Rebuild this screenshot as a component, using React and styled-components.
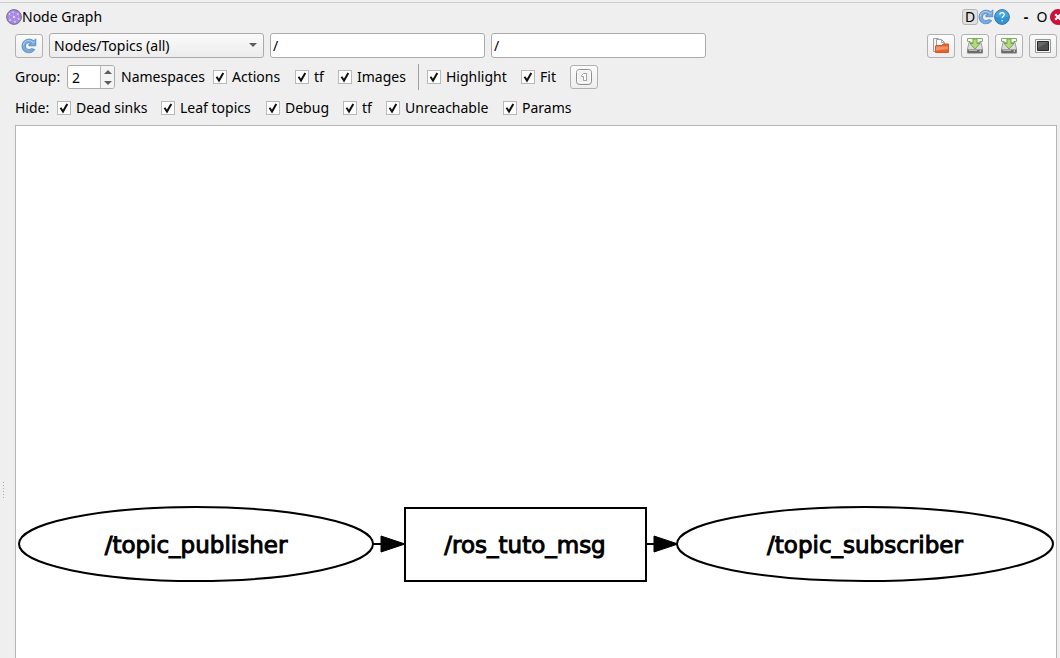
import React, { useState } from "react";
import styled, { createGlobalStyle } from "styled-components";

const Global = createGlobalStyle`
  * { box-sizing: border-box; }
  html, body { margin: 0; background: #efefef; }
  body, input, select, button {
    font-family: "Noto Sans", "Open Sans", sans-serif;
    font-size: 14px;
    color: #000;
  }
`;

const Window = styled.main`
  height: 100vh;
  overflow: hidden;
  display: flex;
  flex-direction: column;
  padding-top: 2px;
  background: #efefef;
`;

const TitleBar = styled.header`
  flex: none;
  display: flex;
  align-items: center;
  height: 28px;
  margin-right: -6px;
  padding-left: 6px;
  border-top: 1px solid #cdcdcd;
`;

const Title = styled.h1`
  flex: 1;
  margin: 0;
  font-size: 14px;
  font-weight: 400;
  line-height: 20px;
`;

const TitleButton = styled.button`
  flex: none;
  display: flex;
  align-items: center;
  justify-content: center;
  width: 16px;
  height: 16px;
  padding: 0;
  border: ${(p) => (p.$boxed ? "1px solid #b4b4b4" : "0")};
  border-radius: 3px;
  background: ${(p) => (p.$boxed ? "#e1e1e1" : "transparent")};
  font-weight: ${(p) => (p.$bold ? 700 : 400)};
  line-height: 16px;
`;

const WindowControls = styled.div`
  display: flex;
  margin-left: 8px;
`;

const Body = styled.div`
  flex: 1;
  min-height: 0;
  display: grid;
  grid-template-columns: 15px minmax(0, 1fr);
  padding-right: 3px;
`;

const Gutter = styled.div`
  display: flex;
  flex-direction: column;
  gap: 2px;
  padding: 452px 0 0 3px;
`;

const GripDot = styled.i`
  width: 1px;
  height: 1px;
  background: #a9a9a9;
`;

const Content = styled.div`
  min-width: 0;
  display: flex;
  flex-direction: column;
`;

const Row = styled.div`
  flex: none;
  display: flex;
  align-items: center;
  height: ${(p) => p.$height}px;
  line-height: 20px;
`;

const Toolbar = styled(Row)`
  gap: 6px;
`;

const ToolButton = styled.button`
  flex: none;
  display: flex;
  align-items: center;
  justify-content: center;
  width: 28px;
  height: 24px;
  padding: 0;
  border: 1px solid #b1b1b1;
  border-radius: 3px;
  background: linear-gradient(#fbfbfb, #eeeeee);
`;

const Actions = styled.div`
  display: flex;
  gap: 6px;
  margin-left: auto;
`;

const Field = styled.div`
  flex: 0 1 215px;
  min-width: 60px;
  display: grid;
  align-items: center;
`;

const Select = styled.select`
  grid-area: 1 / 1;
  appearance: none;
  width: 100%;
  height: 25px;
  padding: 0 20px 0 4px;
  border: 1px solid #ababab;
  border-radius: 3px;
  background: linear-gradient(#fafafa, #ececec);
`;

const SelectArrow = styled.svg`
  grid-area: 1 / 1;
  justify-self: end;
  margin-right: 7px;
  pointer-events: none;
`;

const TextInput = styled.input`
  width: 100%;
  height: 25px;
  padding: 0 2px;
  border: 1px solid #ababab;
  border-radius: 3px;
  background: #fff;
`;

const Label = styled.label`
  flex: none;
  width: ${(p) => p.$width}px;
  white-space: nowrap;
`;

const Spinner = styled.div`
  flex: none;
  display: flex;
  width: 48px;
  height: 24px;
  margin-right: 6px;
  border: 1px solid #ababab;
  border-radius: 3px;
  background: #fff;
  overflow: hidden;
`;

const SpinInput = styled.input`
  appearance: textfield;
  flex: 1;
  min-width: 0;
  padding: 0 4px;
  border: 0;
  background: transparent;
  &::-webkit-inner-spin-button { display: none; }
`;

const SpinSteps = styled.div`
  display: grid;
  grid-template-rows: 1fr 1fr;
  width: 14px;
  border-left: 1px solid #b8b8b8;
  background: #f4f4f4;
`;

const Step = styled.button`
  display: flex;
  align-items: center;
  justify-content: center;
  padding: 0;
  border: 0;
  background: transparent;
`;

const CheckLabel = styled.label`
  flex: none;
  display: flex;
  align-items: center;
  gap: 5px;
  width: ${(p) => p.$width}px;
  white-space: nowrap;
`;

const CheckFrame = styled.span`
  display: grid;
  width: 14px;
  height: 14px;
`;

const CheckInput = styled.input`
  grid-area: 1 / 1;
  appearance: none;
  width: 14px;
  height: 14px;
  margin: 0;
  border: 1px solid #b9b9b9;
  background: #fff;
  & + svg { visibility: hidden; }
  &:checked + svg { visibility: visible; }
`;

const CheckMark = styled.svg`
  grid-area: 1 / 1;
  pointer-events: none;
`;

const Divider = styled.span`
  flex: none;
  width: 1px;
  height: 26px;
  margin-right: 8px;
  background: #9f9f9f;
`;

const Canvas = styled.section`
  flex: none;
  min-height: 838px;
  display: flex;
  align-items: center;
  margin-top: 2px;
  border: 1px solid #b5b5b5;
  background: #fff;
`;

const Graph = styled.svg`
  display: block;
  width: 100%;
  height: auto;
  fill: none;
  stroke: #000;
  stroke-width: 2;
  text {
    font-family: "DejaVu Sans", sans-serif;
    font-size: 23px;
    text-anchor: middle;
    fill: #000;
    stroke-width: 1;
  }
  .arrow { fill: #000; stroke-width: 1; }
`;

const ReloadIcon = () => (
  <svg width="16" height="16" viewBox="0 0 16 16" aria-hidden="true">
    <path
      d="M14.8.8v7H7.900V6.200l2.300-.7C7.800 3.800 4.700 5 4.500 8c-.1 3 3.400 4.700 6.200 2.600l3 .9C11.300 16.500 1.300 16 1 8.300.9 1.700 8.400-.8 12.800 2.800z"
      fill="#79abe0"
      stroke="#4b83bf"
      strokeWidth="0.8"
    />
    <path d="M2.300 7.500c.4-4.400 5.200-6.300 8.600-3.900l1.600.9 1-1" fill="none" stroke="#b5d3f0" strokeWidth="1" />
  </svg>
);

const GraphIcon = () => (
  <svg width="16" height="16" viewBox="0 0 16 16" aria-hidden="true">
    <circle cx="8" cy="8" r="7.400" fill="#a184e2" stroke="#77728c" strokeWidth="1" />
    <path d="M3 5l4-2 5 2 1 5-4 3-5-2zM7 3l1 5 4-3M8 8l-5-3M8 8l1 5M8 8l5 2M8 8l-4 3" fill="none" stroke="#c4aff3" strokeWidth="0.6" />
    <g fill="#eee8ff">
      <circle cx="3.500" cy="5" r=".7" /><circle cx="7" cy="3" r=".7" /><circle cx="12" cy="5" r=".8" />
      <circle cx="8" cy="8" r=".9" /><circle cx="13" cy="10" r=".7" /><circle cx="9" cy="13" r=".8" /><circle cx="4" cy="11" r=".8" />
    </g>
  </svg>
);

const HelpIcon = () => (
  <svg width="16" height="16" viewBox="0 0 16 16" aria-hidden="true">
    <circle cx="8" cy="8" r="7.400" fill="#2f93d8" stroke="#4a7396" strokeWidth="1" />
    <path d="M1.500 7.500a6.500 6.500 0 0 1 13 0c-4 1.500-9 1.500-13 0z" fill="#48a5e2" />
    <path d="M5.800 5.600c.2-2.600 4.600-2.500 4.500 0 0 1.600-2.200 1.700-2.200 3.700" fill="none" stroke="#fff" strokeWidth="1.200" />
    <circle cx="8.100" cy="11.800" r=".8" fill="#fff" />
  </svg>
);

const CloseIcon = () => (
  <svg width="16" height="16" viewBox="0 0 16 16" aria-hidden="true">
    <circle cx="8" cy="8" r="7.600" fill="#d0103a" stroke="#b00c30" strokeWidth=".8" />
    <path d="M5.200 5.200l5.600 5.600M10.800 5.200l-5.600 5.600" stroke="#fff" strokeWidth="2.200" />
  </svg>
);

const FolderIcon = () => (
  <svg width="18" height="16" viewBox="0 0 18 16" aria-hidden="true">
    <path d="M1.500.5h5l2 2v11h-7z" fill="#f3f3f3" stroke="#a0a0a0" />
    <path d="M4.500 1.500h5l3 3v7h-8z" fill="#fff" stroke="#a0a0a0" />
    <path d="M9.500 1.500v3h3" fill="none" stroke="#a0a0a0" />
    <path d="M3.500 14.500V8l.5-.5h6l1-1.500h5.500v8.500z" fill="#e8622a" stroke="#d4592a" />
    <path d="M4 8.500h12v2.500L4 12.500z" fill="#f3946a" />
  </svg>
);

const SaveIcon = () => (
  <svg width="18" height="16" viewBox="0 0 18 16" aria-hidden="true">
    <path d="M3 4.500h12l1.500 6.500v4h-15v-4z" fill="#dcdcdc" stroke="#a0a0a0" />
    <path d="M1.500 11.500h15v3.700h-15z" fill="#6b6b6b" />
    <path d="M3 12.500h8" stroke="#b8b8b8" />
    <circle cx="14.300" cy="13" r=".8" fill="#eee" />
    <path d="M1.500.5h15v3h-3M1.500.5v3h3" fill="#f1f6e9" stroke="#86ad62" />
    <path d="M7 1h4v4.500h3L9 11 4 5.500h3z" fill="#b0dc78" stroke="#7aa556" />
  </svg>
);

const ScreenIcon = () => (
  <svg width="16" height="14" viewBox="0 0 16 14" aria-hidden="true">
    <path d="M.5.500h15v13H.5z" fill="#f4f4f4" stroke="#969696" />
    <path d="M2.500 2.500h11v9h-11z" fill="#4b4f50" stroke="#272b2c" />
    <path d="M3 3h10L3 9z" fill="#666a6b" />
  </svg>
);

const FitIcon = () => (
  <svg width="16" height="16" viewBox="0 0 16 16" aria-hidden="true">
    <rect x=".5" y=".5" width="15" height="15" rx="3" fill="#ededed" stroke="#8d8d8d" />
    <rect x="1.500" y="1.500" width="13" height="12" rx="2" fill="#f1f1f1" stroke="#fff" />
    <path d="M5.500 6.500l2-2h3v7h-3v-4h-2z" fill="#fff" stroke="#8c8c8c" strokeWidth=".8" />
  </svg>
);

const Triangle = ({ up }) => (
  <svg width="8" height="4" viewBox="0 0 8 4" aria-hidden="true">
    <path d={up ? "M0 4l4-4 4 4z" : "M0 0l4 4 4-4z"} fill="#5c5c5c" />
  </svg>
);

function Check({ text, width }) {
  return (
    <CheckLabel $width={width}>
      <CheckFrame>
        <CheckInput type="checkbox" defaultChecked />
        <CheckMark width="14" height="14" viewBox="0 0 14 14" aria-hidden="true">
          <path d="M3.500 6.800l2.500 3.800L10.300 3" fill="none" stroke="#111" strokeWidth="2" />
        </CheckMark>
      </CheckFrame>
      {text}
    </CheckLabel>
  );
}

const groupChecks = [["Actions", 82], ["tf", 43], ["Images", 80]];
const viewChecks = [["Highlight", 94], ["Fit", 49]];
const hideChecks = [
  ["Dead sinks", 104], ["Leaf topics", 105], ["Debug", 77],
  ["tf", 43], ["Unreachable", 117], ["Params", 80],
];

export default function App() {
  const [depth, setDepth] = useState(2);
  return (
    <Window>
      <Global />
      <TitleBar>
        <GraphIcon />
        <Title>Node Graph</Title>
        <TitleButton $boxed>D</TitleButton>
        <TitleButton aria-label="Reload"><ReloadIcon /></TitleButton>
        <TitleButton aria-label="Help"><HelpIcon /></TitleButton>
        <WindowControls>
          <TitleButton $bold>-</TitleButton>
          <TitleButton>O</TitleButton>
          <TitleButton aria-label="Close"><CloseIcon /></TitleButton>
        </WindowControls>
      </TitleBar>
      <Body>
        <Gutter>
          {[0, 1, 2, 3, 4, 5].map((n) => <GripDot key={n} />)}
        </Gutter>
        <Content>
          <Toolbar $height={31}>
            <ToolButton aria-label="Refresh graph"><ReloadIcon /></ToolButton>
            <Field>
              <Select aria-label="Graph type" defaultValue="all">
                <option value="all">Nodes/Topics (all)</option>
              </Select>
              <SelectArrow width="8" height="5" viewBox="0 0 8 5" aria-hidden="true">
                <path d="M0 0l4 4 4-4z" fill="#5c5c5c" />
              </SelectArrow>
            </Field>
            <Field><TextInput aria-label="Namespace filter" defaultValue="/" /></Field>
            <Field><TextInput aria-label="Topic filter" defaultValue="/" /></Field>
            <Actions>
              <ToolButton aria-label="Open"><FolderIcon /></ToolButton>
              <ToolButton aria-label="Save as DOT"><SaveIcon /></ToolButton>
              <ToolButton aria-label="Save as SVG"><SaveIcon /></ToolButton>
              <ToolButton aria-label="Save as image"><ScreenIcon /></ToolButton>
            </Actions>
          </Toolbar>
          <Row $height={32}>
            <Label $width={52} htmlFor="depth">Group:</Label>
            <Spinner>
              <SpinInput id="depth" type="number" value={depth} onChange={(e) => setDepth(+e.target.value)} />
              <SpinSteps>
                <Step aria-label="Increase" onClick={() => setDepth(depth + 1)}><Triangle up /></Step>
                <Step aria-label="Decrease" onClick={() => setDepth(depth - 1)}><Triangle /></Step>
              </SpinSteps>
            </Spinner>
            <Label $width={92} htmlFor="depth">Namespaces</Label>
            {groupChecks.map(([text, width]) => <Check key={text} text={text} width={width} />)}
            <Divider />
            {viewChecks.map(([text, width]) => <Check key={text} text={text} width={width} />)}
            <ToolButton aria-label="Fit in view"><FitIcon /></ToolButton>
          </Row>
          <Row $height={30}>
            <Label as="span" $width={42}>Hide:</Label>
            {hideChecks.map(([text, width]) => <Check key={text} text={text} width={width} />)}
          </Row>
          <Canvas>
            <Graph viewBox="0 0 1040 80" role="img" aria-label="Node graph">
              <ellipse cx="180" cy="40" rx="177" ry="37" />
              <text x="180" y="49">/topic_publisher</text>
              <path d="M357 40h10" />
              <path className="arrow" d="M365 32l24 8-24 8z" />
              <rect x="389" y="4" width="241" height="73" />
              <text x="509" y="49">/ros_tuto_msg</text>
              <path d="M630 40h10" />
              <path className="arrow" d="M638 32l24 8-24 8z" />
              <ellipse cx="849" cy="40" rx="188" ry="37" />
              <text x="849" y="49">/topic_subscriber</text>
            </Graph>
          </Canvas>
        </Content>
      </Body>
    </Window>
  );
}
